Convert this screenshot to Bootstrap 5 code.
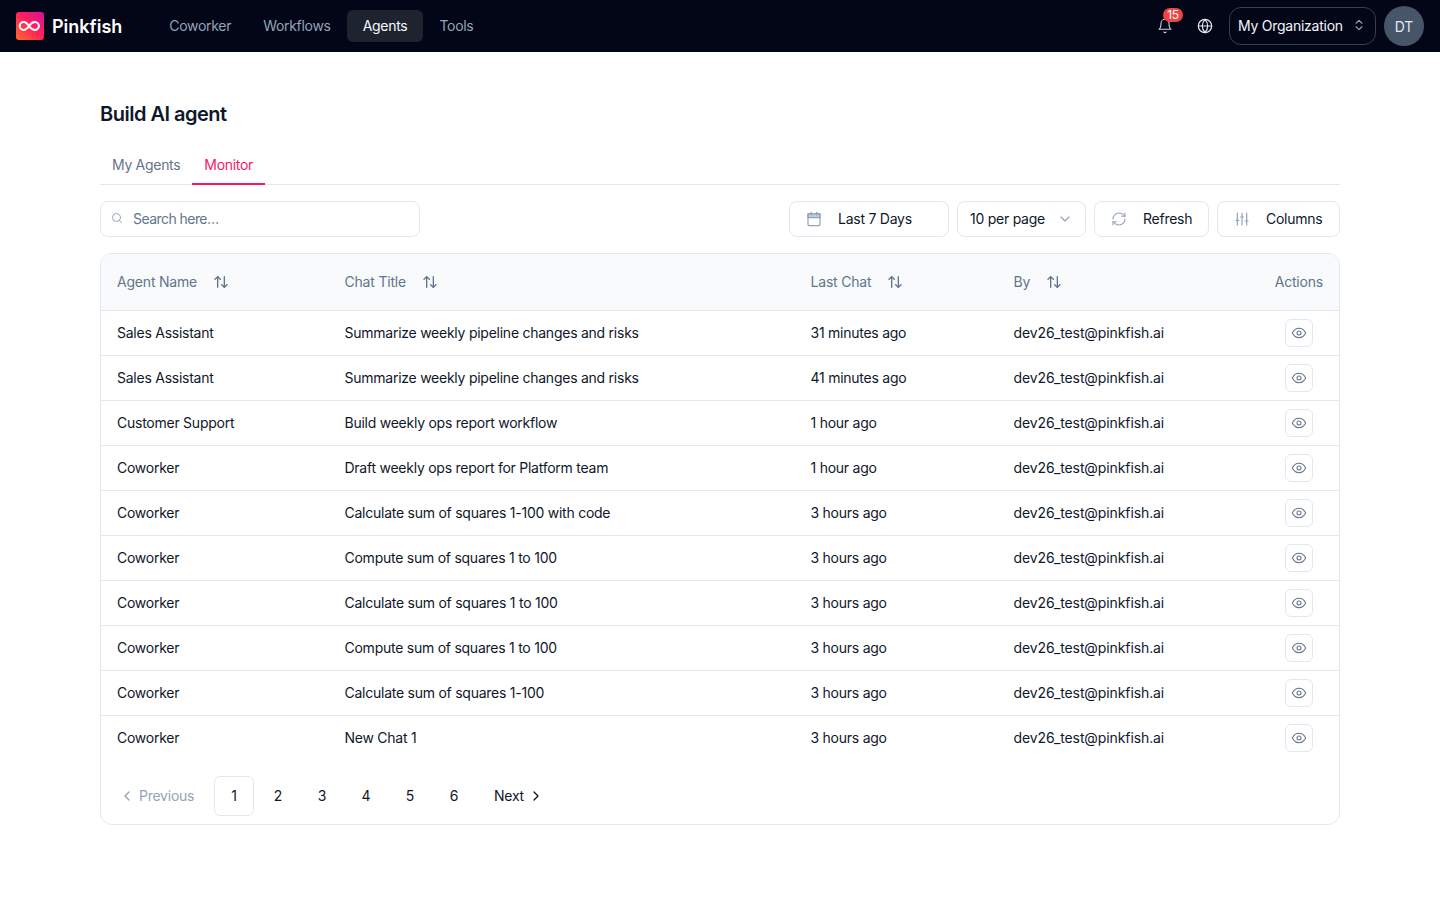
<!DOCTYPE html>
<html lang="en">
<head>
  <meta charset="UTF-8">
  <title>Pinkfish - Build AI agent</title>
  <link href="https://cdn.jsdelivr.net/npm/bootstrap@5.3.0/dist/css/bootstrap.min.css" rel="stylesheet">
  <style>
    body { font-family: Inter, "Liberation Sans", sans-serif; font-size: 14px; color: #0f172a; background: #fff; letter-spacing: -0.25px; }
    svg { display: block; flex: none; }
    .top-bar { height: 52px; background: #020617; padding: 0 16px; }
    .brand-name { font-size: 18px; font-weight: 600; color: #fff; margin-left: 8px; margin-right: 31px; letter-spacing: 0; }
    .top-link { display: block; padding: 0 16px; height: 32px; line-height: 32px; color: #94a3b8; border-radius: 6px; text-decoration: none; letter-spacing: -0.3px; }
    .top-link.on { background: #1e2330; color: #f8fafc; }
    .bell-wrap { position: relative; width: 16px; height: 16px; margin-right: 24px; color: #cbd5e1; }
    .bell-count { position: absolute; top: -10px; left: 6px; width: 20px; height: 14px; border-radius: 7px; background: #ef4444; color: #fff; font-size: 12px; line-height: 14px; text-align: center; letter-spacing: -0.3px; }
    .globe-wrap { color: #e2e8f0; margin-right: 16px; }
    .org-pick { width: 147px; height: 38px; border: 1px solid #334155; border-radius: 12px; color: #f1f5f9; padding: 0 9px 2px 8px; margin-right: 8px; }
    .avatar-dot { width: 40px; height: 40px; border-radius: 50%; background: #475569; color: #e2e8f0; letter-spacing: 0; }
    .page-wrap { padding: 0 100px; }
    .page-title { font-size: 20px; font-weight: 600; line-height: 28px; margin: 48px 0 0; color: #0f172a; letter-spacing: -0.5px; }
    .tab-row { margin-top: 20px; height: 37px; border-bottom: 1px solid #e2e8f0; }
    .tab-item { display: block; height: 37px; padding: 0 12px; line-height: 33px; color: #64748b; text-decoration: none; letter-spacing: -0.3px; }
    .tab-item.on { color: #f5196e; border-bottom: 2px solid #f5196e; }
    .tool-row { margin-top: 16px; height: 36px; }
    .search-box { width: 320px; height: 36px; border: 1px solid #e2e8f0; border-radius: 8px; padding-left: 10px; color: #94a3b8; }
    .search-box svg { margin-top: -3px; }
    .search-box input { border: 0; outline: 0; padding: 0 0 2px; margin-left: 10px; font-size: 14px; flex: 1; color: #0f172a; background: transparent; letter-spacing: -0.55px; }
    .search-box input::placeholder { color: #64748b; opacity: 1; }
    .tool-btn { height: 36px; border: 1px solid #e2e8f0; border-radius: 8px; background: #fff; color: #0f172a; font-size: 14px; padding: 0 16px 2px; letter-spacing: -0.25px; }
    .tool-btn svg { color: #94a3b8; margin-top: 2px; }
    .btn-range { width: 160px; }
    .btn-perpage { width: 129px; padding: 0 12px 2px; }
    .btn-refresh { width: 115px; }
    .btn-columns { width: 123px; }
    .data-panel { margin-top: 16px; border: 1px solid #e2e8f0; border-radius: 12px; overflow: hidden; height: 572px; }
    .data-grid { table-layout: fixed; width: 100%; margin: 0; font-size: 14px; }
    .col-agent { width: 227.5px; }
    .col-chat { width: 466px; }
    .col-last { width: 203px; }
    .col-actions { width: 115px; }
    .data-grid th { height: 56px; background: #f8fafc; color: #64748b; font-weight: 400; padding: 0 16px; vertical-align: middle; border-bottom: 1px solid #e2e8f0; letter-spacing: -0.2px; }
    .data-grid td { height: 45px; padding: 0 16px; vertical-align: middle; color: #0f172a; border-bottom: 1px solid #e2e8f0; }
    .data-grid tr:last-child td { border-bottom: 0; }
    .mail-cell { letter-spacing: -0.1px; }
    .sort-mark { color: #64748b; margin-left: 16px; }
    .view-btn { width: 28px; height: 28px; border: 1px solid #e2e8f0; border-radius: 6px; background: #fff; color: #64748b; margin-left: auto; margin-right: 10px; padding: 0; }
    .pager-row { padding: 0 0 0 16px; margin-top: 16px; }
    .pager-item { width: 40px; height: 40px; margin-right: 4px; border: 1px solid transparent; border-radius: 6px; background: none; color: #0f172a; font-size: 14px; padding: 0 0 1px; }
    .pager-item.on { border-color: #e2e8f0; }
    .pager-prev { color: #94a3b8; width: 93px; height: 40px; margin-right: 4px; padding: 0 0 1px 2px; }
    .pager-next { height: 40px; margin-left: 16px; color: #0f172a; padding-bottom: 1px; }
  </style>
</head>
<body>
  <nav class="top-bar d-flex align-items-center">
    <svg width="28" height="28" viewBox="0 0 28 28">
      <defs><linearGradient id="logoFill" x1="1" y1="0" x2="0" y2="1"><stop offset="0" stop-color="#d6109c"/><stop offset=".45" stop-color="#ff1f5f"/><stop offset="1" stop-color="#ff6a2b"/></linearGradient></defs>
      <rect width="28" height="28" rx="3" fill="url(#logoFill)"/>
      <path d="M13 14c-2-2.800-3.400-4-5.300-4a4 4 0 0 0 0 8c1.900 0 3.300-1.200 5.300-4c2-2.800 3.800-4 5.800-4c2.200 0 3.900 2 4.200 4c-.3 2-2 4-4.200 4c-2 0-3.800-1.200-5.800-4z" fill="none" stroke="#fff" stroke-width="2"/>
    </svg>
    <span class="brand-name">Pinkfish</span>
    <a class="top-link" href="#">Coworker</a>
    <a class="top-link" href="#">Workflows</a>
    <a class="top-link on" href="#">Agents</a>
    <a class="top-link" href="#">Tools</a>
    <div class="ms-auto d-flex align-items-center">
      <div class="bell-wrap">
        <svg width="16" height="16" viewBox="0 0 24 24" fill="none" stroke="currentColor" stroke-width="1.600" stroke-linecap="round" stroke-linejoin="round"><path d="M6 8a6 6 0 0 1 12 0c0 7 3 9 3 9H3s3-2 3-9"/><path d="M10.300 21a2 2 0 0 0 3.400 0"/></svg>
        <span class="bell-count">15</span>
      </div>
      <div class="globe-wrap">
        <svg width="16" height="16" viewBox="0 0 24 24" fill="none" stroke="currentColor" stroke-width="1.800" stroke-linecap="round" stroke-linejoin="round"><circle cx="12" cy="12" r="10"/><path d="M2 12h20"/><path d="M12 2a15 15 0 0 1 4 10 15 15 0 0 1-4 10 15 15 0 0 1-4-10 15 15 0 0 1 4-10z"/></svg>
      </div>
      <div class="org-pick d-flex align-items-center justify-content-between">
        <span>My Organization</span>
        <svg width="14" height="14" viewBox="0 0 24 24" fill="none" stroke="#94a3b8" stroke-width="2" stroke-linecap="round" stroke-linejoin="round"><path d="m7 15 5 5 5-5"/><path d="m7 9 5-5 5 5"/></svg>
      </div>
      <div class="avatar-dot d-flex align-items-center justify-content-center">DT</div>
    </div>
  </nav>

  <main class="page-wrap">
    <h1 class="page-title">Build AI agent</h1>

    <div class="tab-row d-flex">
      <a class="tab-item" href="#">My Agents</a>
      <a class="tab-item on" href="#">Monitor</a>
    </div>

    <div class="tool-row d-flex align-items-center">
      <label class="search-box d-flex align-items-center">
        <svg width="12" height="12" viewBox="0 0 24 24" fill="none" stroke="currentColor" stroke-width="2" stroke-linecap="round"><circle cx="11" cy="11" r="8"/><path d="m21 21-4.300-4.300"/></svg>
        <input type="text" placeholder="Search here…">
      </label>
      <div class="ms-auto d-flex gap-2">
        <button class="tool-btn btn-range d-flex align-items-center">
          <svg class="me-3" width="16" height="16" viewBox="0 0 24 24" fill="none" stroke="currentColor" stroke-width="1.800" stroke-linecap="round" stroke-linejoin="round"><path d="M8 2v4"/><path d="M16 2v4"/><rect x="3" y="4" width="18" height="18" rx="2"/><path d="M3 4h18v6H3z" fill="currentColor" fill-opacity=".55"/></svg>
          Last 7 Days
        </button>
        <button class="tool-btn btn-perpage d-flex align-items-center">
          10 per page
          <svg class="ms-auto" width="16" height="16" viewBox="0 0 24 24" fill="none" stroke="currentColor" stroke-width="1.800" stroke-linecap="round" stroke-linejoin="round"><path d="m6 9 6 6 6-6"/></svg>
        </button>
        <button class="tool-btn btn-refresh d-flex align-items-center">
          <svg class="me-3" width="16" height="16" viewBox="0 0 24 24" fill="none" stroke="currentColor" stroke-width="1.600" stroke-linecap="round" stroke-linejoin="round"><path d="M3 12a9 9 0 0 1 9-9 9.750 9.750 0 0 1 6.740 2.740L21 8"/><path d="M21 3v5h-5"/><path d="M21 12a9 9 0 0 1-9 9 9.750 9.750 0 0 1-6.740-2.740L3 16"/><path d="M8 16H3v5"/></svg>
          Refresh
        </button>
        <button class="tool-btn btn-columns d-flex align-items-center">
          <svg class="me-3" width="16" height="16" viewBox="0 0 24 24" fill="none" stroke="currentColor" stroke-width="1.800" stroke-linecap="round"><path d="M5 3v18"/><path d="M12 3v18"/><path d="M19 3v18"/><path d="M3 14h4"/><path d="M10 9h4"/><path d="M17 15h4"/></svg>
          Columns
        </button>
      </div>
    </div>

    <div class="data-panel">
      <table class="data-grid">
        <colgroup><col class="col-agent"><col class="col-chat"><col class="col-last"><col><col class="col-actions"></colgroup>
        <thead id="gridHead"></thead>
        <tbody id="gridBody"></tbody>
      </table>
      <div class="pager-row d-flex align-items-center">
        <div class="pager-prev d-flex align-items-center">
          <svg class="me-1" width="16" height="16" viewBox="0 0 24 24" fill="none" stroke="currentColor" stroke-width="2" stroke-linecap="round" stroke-linejoin="round"><path d="m15 18-6-6 6-6"/></svg>
          Previous
        </div>
        <button class="pager-item on">1</button>
        <button class="pager-item">2</button>
        <button class="pager-item">3</button>
        <button class="pager-item">4</button>
        <button class="pager-item">5</button>
        <button class="pager-item">6</button>
        <div class="pager-next d-flex align-items-center">
          Next
          <svg class="ms-1" width="16" height="16" viewBox="0 0 24 24" fill="none" stroke="currentColor" stroke-width="2" stroke-linecap="round" stroke-linejoin="round"><path d="m9 18 6-6-6-6"/></svg>
        </div>
      </div>
    </div>
  </main>

  <script src="https://cdn.jsdelivr.net/npm/bootstrap@5.3.0/dist/js/bootstrap.bundle.min.js"></script>
  <script>
    const sortIcon = '<svg class="sort-mark" width="16" height="16" viewBox="0 0 24 24" fill="none" stroke="currentColor" stroke-width="2" stroke-linecap="round" stroke-linejoin="round"><path d="M7 20V4"/><path d="m3 8 4-4 4 4"/><path d="M17 4v16"/><path d="m13 16 4 4 4-4"/></svg>';
    const eyeIcon = '<svg width="16" height="16" viewBox="0 0 24 24" fill="none" stroke="currentColor" stroke-width="1.600" stroke-linecap="round" stroke-linejoin="round"><path d="M2 12s3.500-7 10-7 10 7 10 7-3.500 7-10 7-10-7-10-7z"/><circle cx="12" cy="12" r="3"/></svg>';

    const rows = [
      ["Sales Assistant", "Summarize weekly pipeline changes and risks", "31 minutes ago"],
      ["Sales Assistant", "Summarize weekly pipeline changes and risks", "41 minutes ago"],
      ["Customer Support", "Build weekly ops report workflow", "1 hour ago"],
      ["Coworker", "Draft weekly ops report for Platform team", "1 hour ago"],
      ["Coworker", "Calculate sum of squares 1-100 with code", "3 hours ago"],
      ["Coworker", "Compute sum of squares 1 to 100", "3 hours ago"],
      ["Coworker", "Calculate sum of squares 1 to 100", "3 hours ago"],
      ["Coworker", "Compute sum of squares 1 to 100", "3 hours ago"],
      ["Coworker", "Calculate sum of squares 1-100", "3 hours ago"],
      ["Coworker", "New Chat 1", "3 hours ago"]
    ];

    document.getElementById("gridHead").innerHTML = "<tr>" +
      ["Agent Name", "Chat Title", "Last Chat", "By"].map(name =>
        `<th><div class="d-flex align-items-center">${name}${sortIcon}</div></th>`).join("") +
      '<th class="text-end">Actions</th></tr>';

    document.getElementById("gridBody").innerHTML = rows.map(r => `<tr>
      <td>${r[0]}</td><td>${r[1]}</td><td>${r[2]}</td><td class="mail-cell">dev26_test@pinkfish.ai</td>
      <td><button class="view-btn d-flex align-items-center justify-content-center">${eyeIcon}</button></td></tr>`).join("");
  </script>
</body>
</html>
